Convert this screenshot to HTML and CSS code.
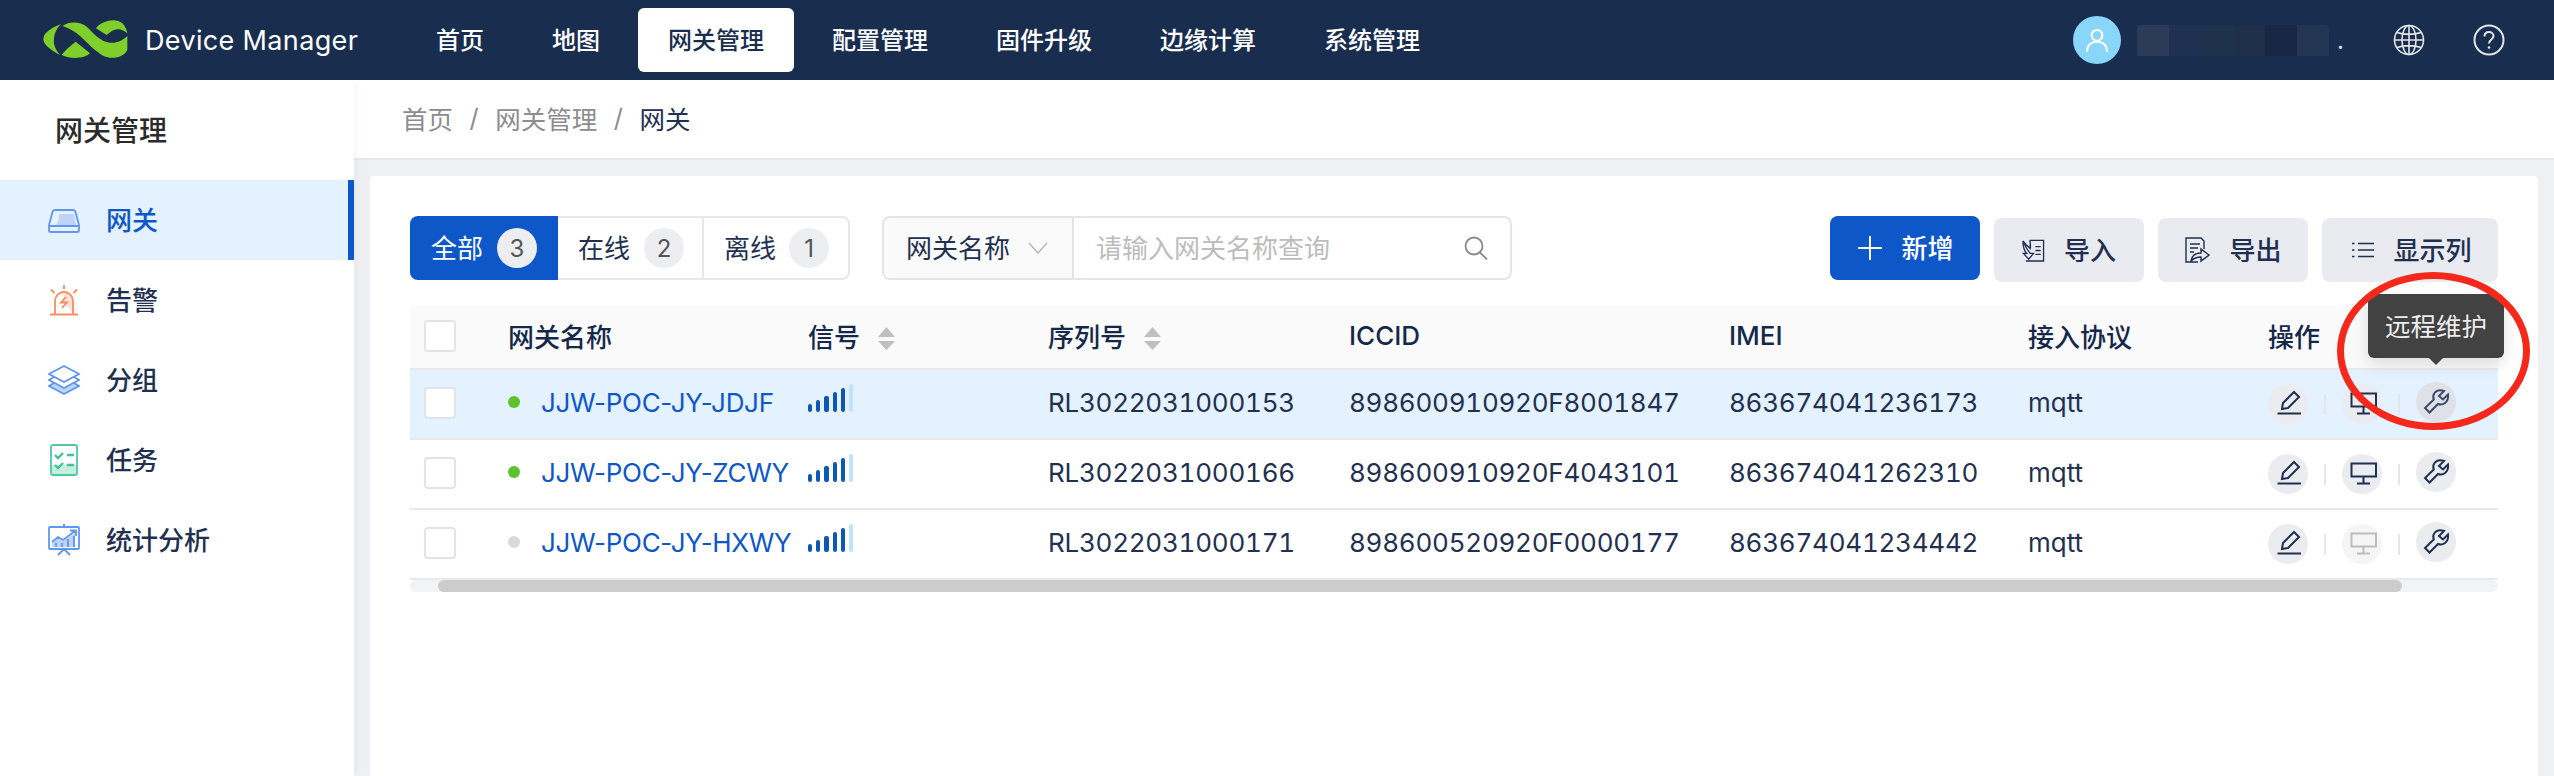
FILE: index.html
```html
<!DOCTYPE html>
<html lang="zh-CN">
<head>
<meta charset="utf-8">
<title>Device Manager</title>
<link rel="stylesheet" href="styles.css">
</head>
<body>
<div class="app">
  <header class="topbar">
    <svg class="logo" viewBox="0 0 300 180" width="100" height="60">
      <path class="logo-g" d="M78 42C45 55 25 70 25 87C25 105 50 122 75 135C58 115 55 100 57 85C58 70 65 55 78 42Z"/>
      <path class="logo-g" d="M82 48C105 33 135 35 155 50C175 68 195 95 225 98C245 100 262 92 277 78V120C265 145 225 150 200 135C170 115 150 90 125 70C110 58 95 52 82 48Z"/>
      <path class="logo-g" d="M80 135C95 115 110 105 122 95L165 130C150 145 110 150 80 135Z"/>
      <path class="logo-g" d="M183 55C195 35 240 20 262 40C270 47 275 60 277 70C262 55 240 50 215 75Z"/>
    </svg>
    <span class="brand">Device Manager</span>
    <nav class="nav">
      <a class="nav-item">首页</a>
      <a class="nav-item">地图</a>
      <a class="nav-item active">网关管理</a>
      <a class="nav-item">配置管理</a>
      <a class="nav-item">固件升级</a>
      <a class="nav-item">边缘计算</a>
      <a class="nav-item">系统管理</a>
    </nav>
    <div class="top-right">
      <span class="avatar">
        <svg viewBox="0 0 24 24" width="28" height="28" class="ic-user"><circle cx="12" cy="8" r="4.6"/><path d="M3.5 22C3.5 16.5 7 13.5 12 13.5S20.500 16.500 20.500 22"/></svg>
      </span>
      <span class="blur-name"><i class="p1"></i><i class="p2"></i><i class="p3"></i><i class="p4"></i><i class="p5"></i><i class="p6"></i></span>
      <span class="name-dot">.</span>
      <svg class="ic-top globe" viewBox="0 0 32 32" width="32" height="32"><circle cx="16" cy="16" r="14.500"/><ellipse cx="16" cy="16" rx="7" ry="14.500"/><path d="M16 1.500V30.500M1.500 16H30.500M4 8.500C11 11 21 11 28 8.500M4 23.500C11 21 21 21 28 23.500"/></svg>
      <svg class="ic-top help" viewBox="0 0 32 32" width="32" height="32"><circle cx="16" cy="16" r="14.500"/><path d="M11.500 12.500C11.500 9.500 13.500 8 16 8C18.500 8 20.500 9.800 20.500 12C20.500 15.500 16 15.500 16 19.500"/><circle class="dot" cx="16" cy="23.500" r="1.300"/></svg>
    </div>
  </header>
  <div class="body">
    <aside class="sidebar">
      <h2 class="side-title">网关管理</h2>
      <a class="side-item current">
        <svg class="side-ic" viewBox="0 0 32 32" width="32" height="32"><path class="fill-b" d="M11 10H26L28 21H8L11 16Z"/><path class="st-b" d="M7 6H25Q27 6 27.500 8L31 21V26Q31 28 29 28H3Q1 28 1 26V21L4.500 8Q5 6 7 6ZM1 22H31"/></svg>
        <span class="side-label">网关</span>
      </a>
      <a class="side-item">
        <svg class="side-ic" viewBox="0 0 32 32" width="32" height="32"><path class="fill-o" d="M17 8A9 9 0 0 1 25 17V28L14 18Z"/><path class="st-o" d="M2 30.500H30M7 30V17A9 9 0 0 1 25 17V30M16 1V5M3 5.500L6.500 9M29 5.500L25.500 9M18 13L13 18.500H19L14 24"/></svg>
        <span class="side-label">告警</span>
      </a>
      <a class="side-item">
        <svg class="side-ic" viewBox="0 0 32 32" width="32" height="32"><path class="fill-b" d="M6 19L1 22L16 30L31 22L26 19L16 24Z"/><path class="st-b" d="M16 2L31 10L16 18L1 10ZM6 13L1 16L16 24L31 16L26 13M6 19L1 22L16 30L31 22L26 19"/></svg>
        <span class="side-label">分组</span>
      </a>
      <a class="side-item">
        <svg class="side-ic" viewBox="0 0 32 32" width="32" height="32"><path class="fill-g" d="M3 21H29V31H3Z"/><rect class="st-g" x="3" y="1" width="26" height="30" rx="2"/><path class="st-c" d="M7 11L10 14L15 9M19 11H26M7 21L10 24L15 19M19 21H26"/></svg>
        <span class="side-label">任务</span>
      </a>
      <a class="side-item">
        <svg class="side-ic" viewBox="0 0 32 32" width="32" height="32"><path class="fill-b" d="M4 23V19L10 14L15 17L27 9V23Z"/><path class="st-b" d="M2 3H30Q31 3 31 4V24Q31 25 30 25H2Q1 25 1 24V4Q1 3 2 3ZM16 0V3M16 25L10 31M16 25L22 31M4 18L10 13L15 16L27 7M22 6.500H28V12M8 19V23M14 19V23M20 15V23M26 12V23"/></svg>
        <span class="side-label">统计分析</span>
      </a>
    </aside>
    <main class="main">
      <div class="crumbs">
        <span>首页</span><span class="sep">/</span><span>网关管理</span><span class="sep">/</span><span class="crumb-now">网关</span>
      </div>
      <div class="content">
        <section class="card">
          <div class="toolbar">
            <div class="seg">
              <button class="seg-btn on">全部<b class="badge">3</b></button>
              <button class="seg-btn">在线<b class="badge">2</b></button>
              <button class="seg-btn last">离线<b class="badge">1</b></button>
            </div>
            <div class="search">
              <div class="select">网关名称
                <svg viewBox="0 0 20 12" width="20" height="12" class="chev"><path d="M1 1L10 11L19 1"/></svg>
              </div>
              <input class="search-input" placeholder="请输入网关名称查询">
              <svg class="search-ic" viewBox="0 0 24 24" width="24" height="24"><circle cx="10" cy="10" r="8.500"/><path d="M16 16.500L23 23.500"/></svg>
            </div>
            <div class="actions">
              <button class="btn primary"><svg viewBox="0 0 24 24" width="24" height="24" class="ic-plus"><path d="M12 0V24M0 12H24"/></svg>新增</button>
              <button class="btn ghost"><svg viewBox="0 0 24 24" width="23" height="23" class="ic-btn"><path d="M8 1.500H22.500V23H4M8 1.500C9 5 9 8 8.500 10M1 2C3 5 5 7 8.500 10V6M1 2C1 8 2 12 5 15H1.500L7 21L12 15H8.500C6 12 4 9 1 2M14 8H19.500M14 12H19.500M14 16H19.500"/></svg>导入</button>
              <button class="btn ghost"><svg viewBox="0 0 26 26" width="26" height="26" class="ic-btn"><path d="M14 25H2V1H17L20 4V12M6 7H16M6 11H14M6 15H10M7 24C8 18 12 16 17 16V12L25 18L17 24V20C13 20 10 21 7 24Z"/></svg>导出</button>
              <button class="btn ghost wide"><svg viewBox="0 0 22 16" width="22" height="16" class="ic-btn"><path d="M6 1.500H22M6 8H22M6 14.500H22M0 1.500H2.500M0 8H2.500M0 14.500H2.500"/></svg>显示列</button>
            </div>
          </div>
          <table class="grid">
            <colgroup>
              <col class="c-check"><col class="c-name"><col class="c-signal"><col class="c-serial"><col class="c-iccid"><col class="c-imei"><col class="c-proto"><col class="c-op">
            </colgroup>
            <thead>
              <tr>
                <th><span class="check"></span></th>
                <th>网关名称</th>
                <th><span class="th-sort">信号<svg viewBox="0 0 17 23" width="17" height="23" class="sort"><path d="M8.500 0L17 10H0ZM0 14H17L8.500 23Z"/></svg></span></th>
                <th><span class="th-sort">序列号<svg viewBox="0 0 17 23" width="17" height="23" class="sort"><path d="M8.500 0L17 10H0ZM0 14H17L8.500 23Z"/></svg></span></th>
                <th>ICCID</th>
                <th>IMEI</th>
                <th>接入协议</th>
                <th>操作</th>
              </tr>
            </thead>
            <tbody>
              <tr class="hovered">
                <td><span class="check"></span></td>
                <td><span class="name"><i class="status on"></i><a>JJW-POC-JY-JDJF</a></span></td>
                <td><span class="signal"><i class="b1"></i><i class="b2"></i><i class="b3"></i><i class="b4"></i><i class="b5"></i><i class="b6"></i></span></td>
                <td class="num">RL3022031000153</td>
                <td class="num">898600910920F8001847</td>
                <td class="num">863674041236173</td>
                <td>mqtt</td>
                <td>
                  <div class="ops">
                    <span class="op"><svg viewBox="0 0 40 40" width="40" height="40"><use href="#i-pen"/></svg></span><i class="op-sep"></i>
                    <span class="op"><svg viewBox="0 0 40 40" width="40" height="40"><use href="#i-screen"/></svg></span><i class="op-sep"></i>
                    <span class="op lift hover">
                      <svg viewBox="0 0 40 40" width="40" height="40"><use href="#i-wrench"/></svg>
                      <span class="tooltip">远程维护</span>
                    </span>
                  </div>
                </td>
              </tr>
              <tr>
                <td><span class="check"></span></td>
                <td><span class="name"><i class="status on"></i><a>JJW-POC-JY-ZCWY</a></span></td>
                <td><span class="signal"><i class="b1"></i><i class="b2"></i><i class="b3"></i><i class="b4"></i><i class="b5"></i><i class="b6"></i></span></td>
                <td class="num">RL3022031000166</td>
                <td class="num">898600910920F4043101</td>
                <td class="num">863674041262310</td>
                <td>mqtt</td>
                <td>
                  <div class="ops">
                    <span class="op"><svg viewBox="0 0 40 40" width="40" height="40"><use href="#i-pen"/></svg></span><i class="op-sep"></i>
                    <span class="op"><svg viewBox="0 0 40 40" width="40" height="40"><use href="#i-screen"/></svg></span><i class="op-sep"></i>
                    <span class="op lift"><svg viewBox="0 0 40 40" width="40" height="40"><use href="#i-wrench"/></svg></span>
                  </div>
                </td>
              </tr>
              <tr>
                <td><span class="check"></span></td>
                <td><span class="name"><i class="status off"></i><a>JJW-POC-JY-HXWY</a></span></td>
                <td><span class="signal"><i class="b1"></i><i class="b2"></i><i class="b3"></i><i class="b4"></i><i class="b5"></i><i class="b6"></i></span></td>
                <td class="num">RL3022031000171</td>
                <td class="num">898600520920F0000177</td>
                <td class="num">863674041234442</td>
                <td>mqtt</td>
                <td>
                  <div class="ops">
                    <span class="op"><svg viewBox="0 0 40 40" width="40" height="40"><use href="#i-pen"/></svg></span><i class="op-sep"></i>
                    <span class="op disabled"><svg viewBox="0 0 40 40" width="40" height="40"><use href="#i-screen"/></svg></span><i class="op-sep"></i>
                    <span class="op lift"><svg viewBox="0 0 40 40" width="40" height="40"><use href="#i-wrench"/></svg></span>
                  </div>
                </td>
              </tr>
            </tbody>
          </table>
          <div class="hscroll"><div class="hthumb"></div></div>
          <div class="red-ring"></div>
        </section>
      </div>
    </main>
  </div>
</div>
<svg class="defs" width="0" height="0">
  <defs>
    <g id="i-pen"><path d="M14 25L15 19L26 8L31 13L20 24ZM9.500 29.500H33"/></g>
    <g id="i-screen"><path d="M9.500 9.500H34V22.500H9.500ZM21.500 23V29M15 29.500H28"/></g>
    <g id="i-wrench"><path d="M32 12.500L27 17.500L23 14L28 9C24 7.500 20.500 8.500 18.500 11C17 13 17 15.500 17.800 17.500L9 26L13.500 30.500L22 22C24.500 23 27 22.500 29 21C31.500 19 32.500 16 32 12.500Z"/></g>
  </defs>
</svg>
</body>
</html>
```
FILE: styles.css
```css
* { box-sizing: border-box; }
html, body { margin: 0; height: 100%; }
body {
  font-family: Inter, "Noto Sans CJK SC", sans-serif;
  font-size: 26px;
  color: #1f3050;
  overflow: hidden;
}
.app { display: flex; flex-direction: column; height: 100vh; }

/* top bar */
.topbar {
  flex: none;
  height: 80px;
  background: #192e4f;
  display: flex;
  align-items: center;
  padding-left: 35px;
  padding-right: 49px;
  position: relative;
  z-index: 2;
}
.logo { flex: none; }
.logo-g { fill: #7fcf2a; }
.brand { color: #fff; font-size: 27px; letter-spacing: 0.35px; margin-left: 10px; width: 212px; white-space: nowrap; }
.nav { display: flex; gap: 8px; margin-left: 49px; }
.nav-item {
  height: 64px;
  padding: 0 30px 3px;
  display: flex;
  align-items: center;
  border-radius: 6px;
  color: #fff;
  font-size: 24px;
  font-weight: 500;
}
.nav-item.active { background: #fff; color: #192e4f; }
.top-right { margin-left: auto; display: flex; align-items: center; }
.avatar {
  width: 48px; height: 48px; border-radius: 50%;
  background: #89d6f8;
  display: flex; align-items: center; justify-content: center;
}
.ic-user { fill: none; stroke: #fff; stroke-width: 1.8; }
.blur-name { display: flex; margin-left: 16px; height: 31px; }
.blur-name i { width: 32px; height: 31px; display: block; }
.p1 { background: #2c3b57; border-radius: 4px 0 0 0; }
.p2 { background: #1f3152; }
.p3 { background: #1f324b; }
.p4 { background: #1e2f4a; }
.p5 { background: #182745; }
.p6 { background: #223552; border-radius: 0 4px 0 0; }
.name-dot { color: #ddd; font-size: 24px; margin-left: 8px; width: 28px; }
.ic-top { fill: none; stroke: #e3e4e6; stroke-width: 2; flex: none; }
.globe { margin-left: 28px; stroke-width: 1.6; }
.help { margin-left: 48px; }
.help .dot { fill: #e3e4e6; stroke: none; }

/* layout */
.body { flex: 1; display: flex; min-height: 0; }
.sidebar {
  flex: none;
  width: 354px;
  background: #fff;
  box-shadow: 2px 0 8px rgba(0, 0, 0, 0.04);
  position: relative;
  z-index: 1;
}
.side-title {
  margin: 0;
  height: 100px;
  padding: 0 0 3px 55px;
  display: flex;
  align-items: center;
  font-size: 28px;
  font-weight: 500;
  color: #2b2b2b;
}
.side-item {
  height: 80px;
  display: flex;
  align-items: center;
  padding-left: 48px;
  gap: 26px;
  font-size: 26px;
  font-weight: 500;
  color: #1f3050;
}
.side-label { padding-bottom: 3px; }
.side-item.current {
  background: #e4f1fe;
  color: #0d57c9;
  border-right: 6px solid #0d57c9;
}
.side-ic { flex: none; fill: none; stroke-width: 1.8; }
.st-b { stroke: #5f97f0; fill: none; }
.fill-b { fill: #bcd4fa; stroke: none; }
.st-o { stroke: #ff8a5c; fill: none; }
.fill-o { fill: #ffe3d8; stroke: none; }
.st-g { stroke: #4fc7a3; fill: none; }
.fill-g { fill: #c5eedf; stroke: none; }
.st-c { stroke: #3fc294; fill: none; stroke-width: 2.4; }

/* main */
.main { flex: 1; min-width: 0; display: flex; flex-direction: column; background: #eff0f4; }
.crumbs {
  flex: none;
  height: 80px;
  padding: 0 0 4px 48px;
  background: #fff;
  border-bottom: 2px solid #e6e7ea;
  display: flex;
  align-items: center;
  font-size: 25.500px;
  color: #8c8c8c;
}
.sep { margin: 0 16.500px; }
.crumb-now { color: #1f3050; }
.content { flex: 1; padding: 16px 16px 0; min-height: 0; }
.card {
  position: relative;
  height: 100%;
  background: #fff;
  border-radius: 4px 4px 0 0;
  padding: 40px 40px 0;
}

/* toolbar */
.toolbar { display: flex; align-items: flex-start; height: 66px; margin-bottom: 24px; }
.seg {
  display: flex;
  width: 440px;
  height: 64px;
  border-radius: 8px;
  background: #fff;
}
.seg-btn {
  font: inherit;
  height: 64px;
  width: 146px;
  padding: 0 0 3px 20px;
  margin: 0;
  display: flex;
  align-items: center;
  gap: 14px;
  background: #fff;
  color: #1f3050;
  border: 2px solid #e6e8ee;
  border-left: 0;
  border-radius: 0;
}
.seg-btn.on {
  width: 148px;
  padding-left: 21px;
  background: #0d57c9;
  border-color: #0d57c9;
  color: #fff;
  border-radius: 8px 0 0 8px;
}
.seg-btn.last { width: 146px; padding-left: 20px; gap: 13px; border-radius: 0 8px 8px 0; }
.badge {
  width: 40px; height: 40px; border-radius: 50%;
  margin-top: 3px;
  background: #eceef1;
  color: #555;
  font-size: 24px;
  font-weight: 400;
  display: flex; align-items: center; justify-content: center;
}
.search {
  margin-left: 32px;
  width: 630px;
  height: 64px;
  border: 2px solid #e3e4ea;
  border-radius: 8px;
  display: flex;
  align-items: center;
  background: #fff;
}
.select {
  width: 190px;
  height: 60px;
  flex: none;
  background: #fafafa;
  border-right: 2px solid #e3e4ea;
  border-radius: 6px 0 0 6px;
  padding: 0 0 3px 22px;
  display: flex;
  align-items: center;
  gap: 18px;
  color: #1f3050;
}
.chev { fill: none; stroke: #bbb; stroke-width: 1.6; margin-top: 3px; }
.search-input {
  flex: 1;
  min-width: 0;
  border: 0;
  outline: 0;
  background: transparent;
  font: inherit;
  padding: 0 0 0 22px;
}
.search-input::placeholder { color: #bcbcbc; opacity: 1; }
.search-ic { flex: none; margin-right: 22px; fill: none; stroke: #8a8a8a; stroke-width: 1.8; }
.actions { margin-left: auto; display: flex; gap: 14px; align-items: flex-start; }
.btn {
  font: inherit;
  font-weight: 500;
  height: 64px;
  width: 150px;
  border: 0;
  border-radius: 8px;
  padding: 0 0 3px;
  display: flex;
  align-items: center;
  justify-content: center;
  gap: 19px;
}
.btn svg { margin-top: 3px; }
.btn.primary { background: #0d57c9; color: #fff; padding-left: 2px; }
.btn.ghost { background: #e9ebf0; color: #1f3050; margin-top: 2px; }
.btn.wide { width: 176px; padding-left: 4px; }
.ic-plus { fill: none; stroke: #fff; stroke-width: 2; }
.ic-btn { fill: none; stroke: #1f3050; stroke-width: 1.4; }

/* table */
.grid { width: 2088px; table-layout: fixed; border-collapse: separate; border-spacing: 0; }
.c-check { width: 98px; }
.c-name { width: 300px; }
.c-signal { width: 240px; }
.c-serial { width: 301px; }
.c-iccid { width: 380px; }
.c-imei { width: 299px; }
.c-proto { width: 240px; }
.c-op { width: 230px; }
.grid th {
  height: 64px;
  padding: 0 0 3px;
  background: #fafafa;
  border-bottom: 2px solid #e8e9ed;
  text-align: left;
  font-weight: 500;
  color: #14284b;
}
.grid td {
  height: 70px;
  padding: 0 0 3px;
  border-bottom: 2px solid #e8e9ed;
  white-space: nowrap;
}
.grid td.num { font-variant-numeric: tabular-nums; letter-spacing: -0.25px; }
.grid .hovered td { background: #e4f1fe; }
.check {
  display: block;
  width: 32px;
  height: 32px;
  margin: 1px 0 0 14px;
  background: #fff;
  border: 2px solid #e1e3ea;
  border-radius: 4px;
}
.th-sort { display: flex; align-items: center; gap: 18px; }
.sort { fill: #bfbfbf; flex: none; margin-top: 5px; }
.name { display: flex; align-items: center; gap: 21px; color: #0d57c9; letter-spacing: -0.3px; }
.status { width: 12px; height: 12px; border-radius: 50%; display: block; flex: none; margin-bottom: 2px; }
.status.on { background: #5fc22d; }
.status.off { background: #d9d9d9; }
.signal { display: flex; align-items: flex-end; gap: 4px; height: 28px; margin-bottom: 9px; }
.signal i { width: 4.200px; display: block; background: #0d57b5; border-radius: 2px; }
.b1 { height: 8px; }
.b2 { height: 12px; }
.b3 { height: 16px; }
.b4 { height: 20px; }
.b5 { height: 24px; }
.signal .b6 { height: 28px; background: #bfe3fc; }
.ops { display: flex; align-items: center; margin-top: 3px; }
.op {
  flex: none;
  position: relative;
  width: 40px;
  height: 40px;
  border-radius: 50%;
  background: #ebecf0;
  fill: none;
  stroke: #1f3050;
  stroke-width: 2;
}
.op svg { display: block; }
.op.lift { margin-top: -4px; }
.op.hover { background: #dfe1e6; stroke: #3a4a6a; }
.op.disabled { background: #f5f5f5; stroke: #bdbdbd; }
.op-sep { flex: none; width: 2px; height: 21px; margin: 0 16px; background: #e5e6ea; display: block; }
.tooltip {
  position: absolute;
  left: 50%;
  bottom: calc(100% + 24px);
  transform: translateX(-50%);
  width: 136px;
  height: 64px;
  padding-bottom: 3px;
  border-radius: 6px;
  background: #424242;
  color: rgba(255, 255, 255, 0.92);
  display: flex;
  align-items: center;
  justify-content: center;
  font-size: 25.500px;
  box-shadow: 0 6px 16px rgba(0, 0, 0, 0.12);
  stroke: none;
}
.tooltip::after {
  content: "";
  position: absolute;
  left: 50%;
  top: 100%;
  margin-left: -7px;
  border: 7px solid transparent;
  border-top-color: #424242;
  border-bottom-width: 0;
}
.hscroll { height: 12px; background: #f2f3f5; border-radius: 6px; width: 2088px; }
.hthumb { width: 1964px; height: 12px; margin-left: 28px; background: #cccccc; border-radius: 6px; }
.red-ring {
  position: absolute;
  left: 1967px;
  top: 96px;
  width: 193px;
  height: 158px;
  border: 7px solid #f4291c;
  border-radius: 50%;
}
.defs { position: absolute; }
```
